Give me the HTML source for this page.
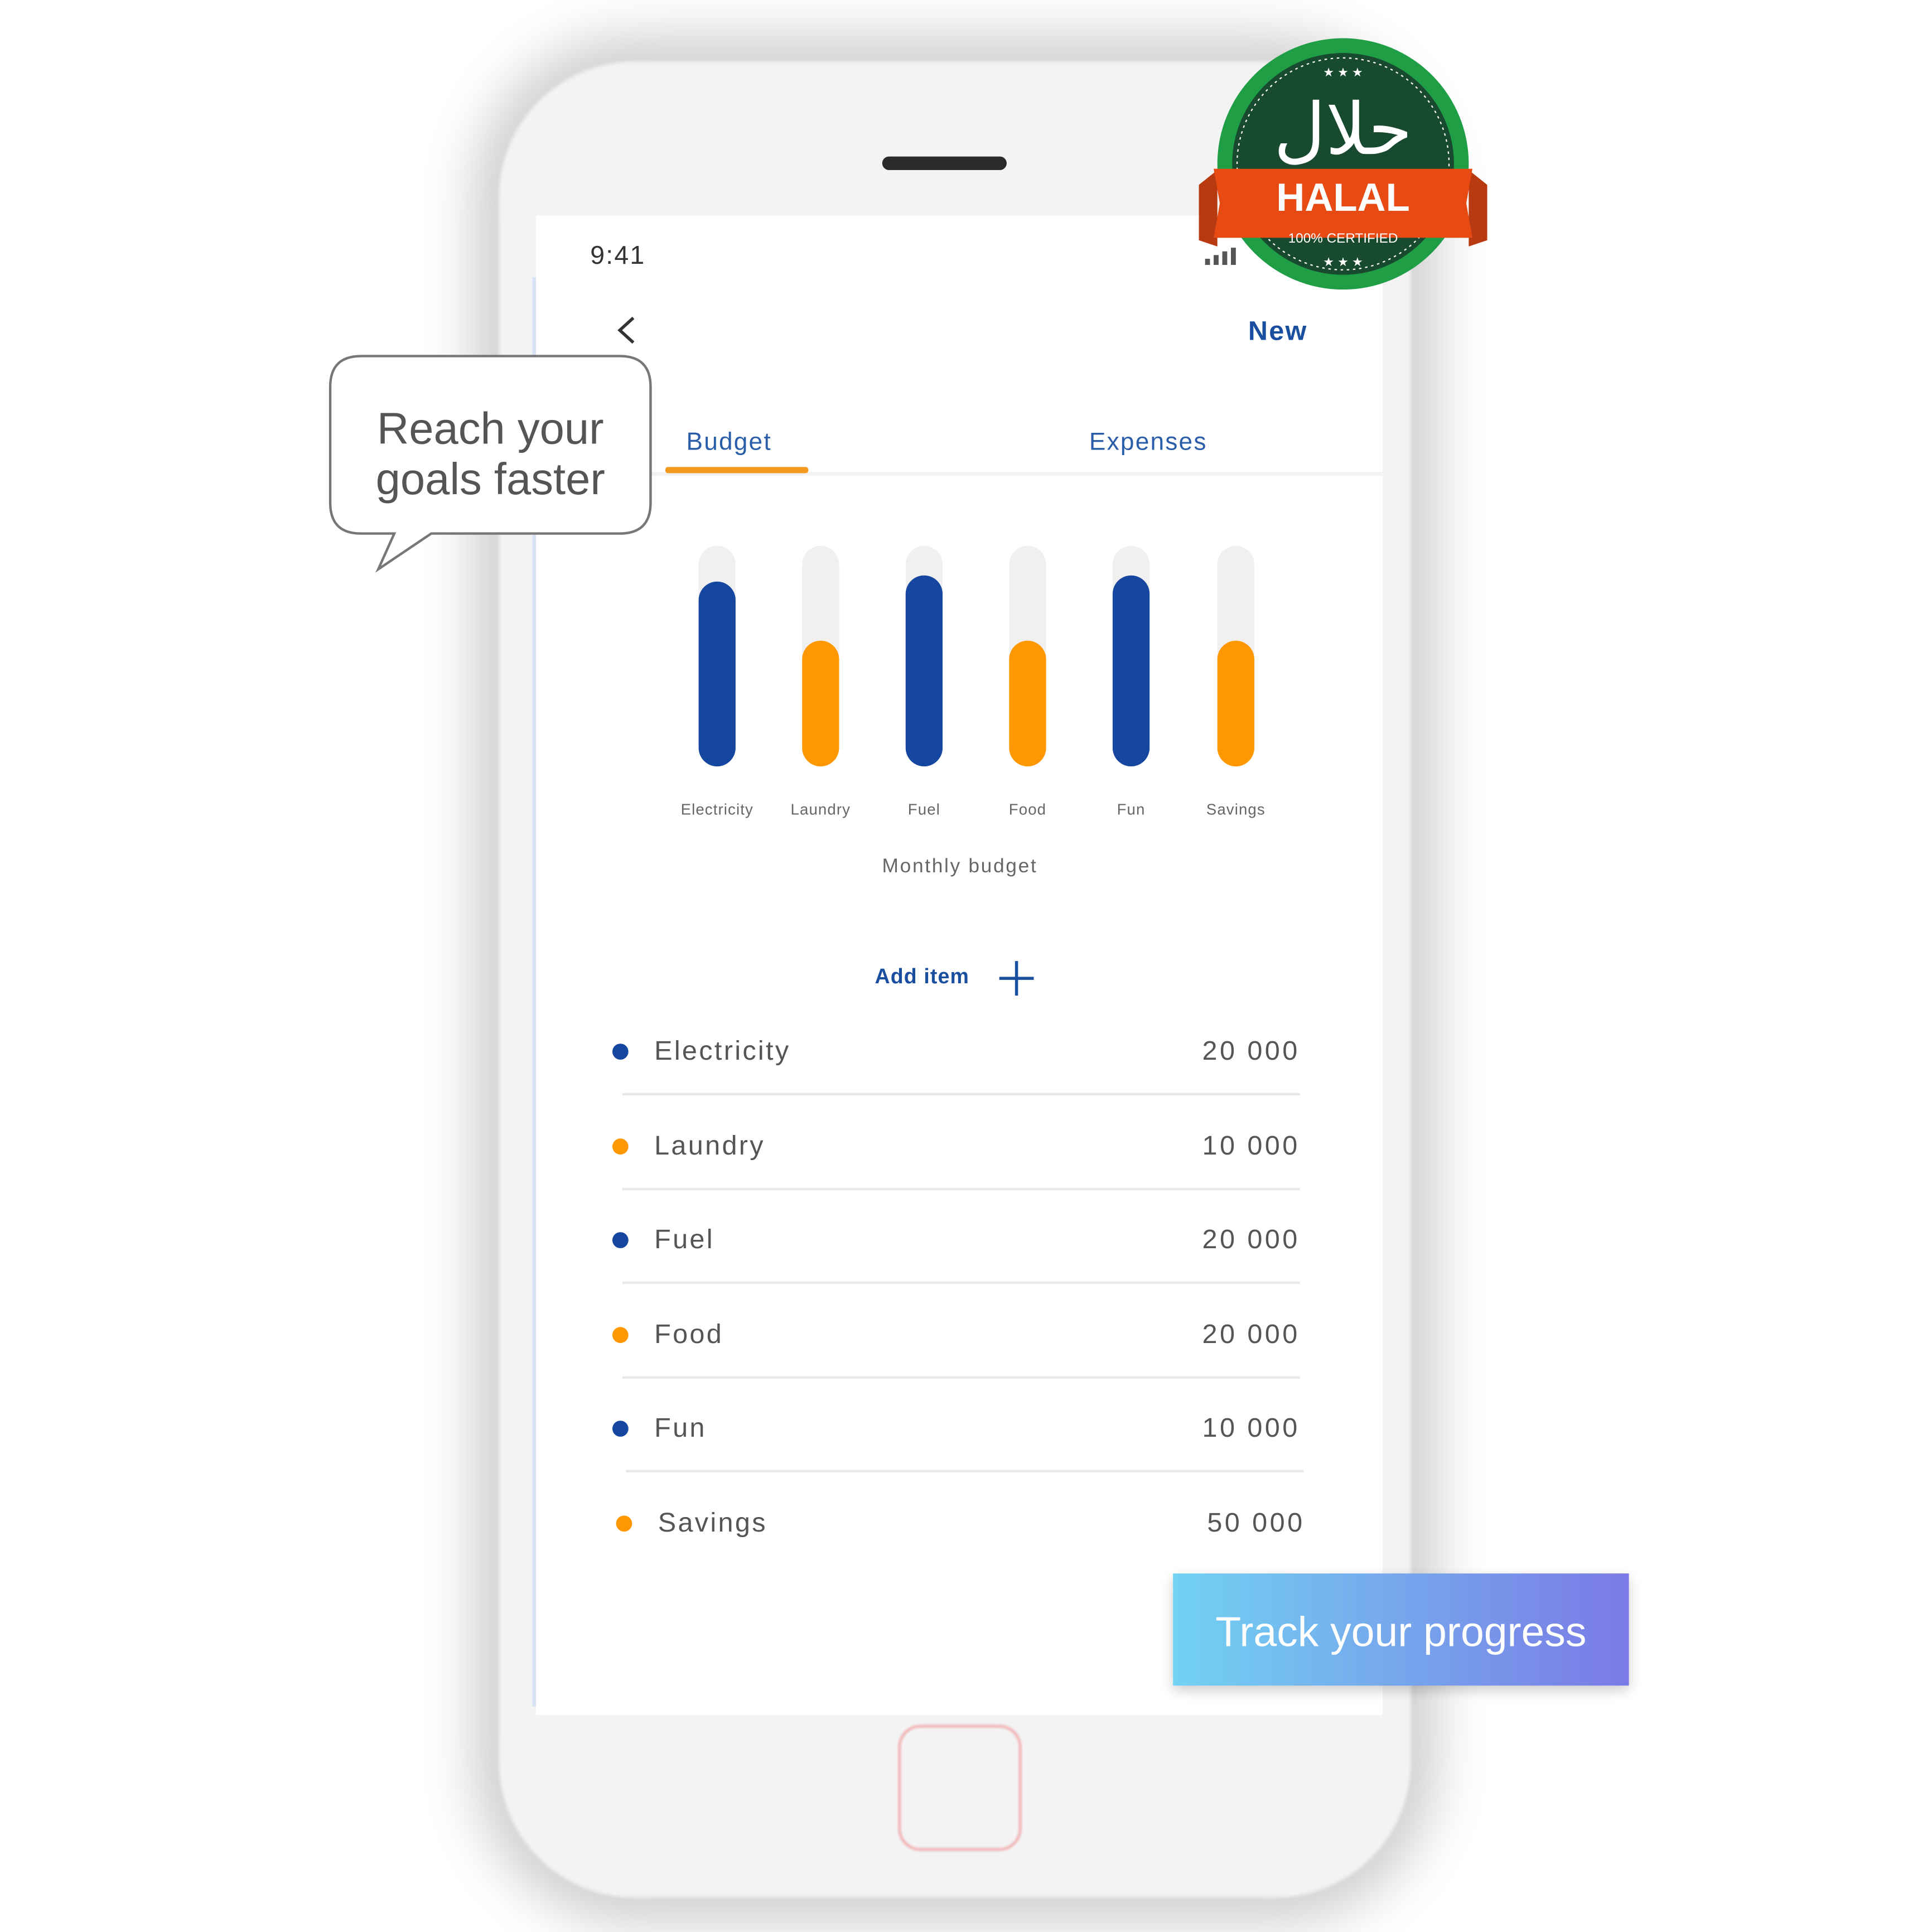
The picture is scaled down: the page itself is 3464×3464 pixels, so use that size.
<!DOCTYPE html>
<html><head><meta charset="utf-8">
<style>
html,body{margin:0;padding:0;background:#fff;}
body{width:3464px;height:3464px;overflow:hidden;position:relative;}
#w{position:absolute;left:0;top:0;width:1568px;height:1568px;transform:scale(2.2092);transform-origin:0 0;font-family:"Liberation Sans",sans-serif;}
.a{position:absolute;}
.phone{left:405px;top:50px;width:740px;height:1490px;border-radius:110px;background:#f4f3f4;box-shadow:0 0 45px 20px rgba(0,0,0,0.2);filter:blur(1.5px);}
.screen{left:435px;top:175px;width:687px;height:1217px;background:#fff;}
.lbl{font-size:12.5px;color:#666;text-align:center;width:90px;margin-left:-45px;top:650px;letter-spacing:0.5px;}
.track{width:30px;top:443px;height:179px;background:#f0f0f0;border-radius:15px;margin-left:-15px;}
.fill{width:30px;bottom:0;left:0;border-radius:15px;position:absolute;}
.row{left:531px;font-size:22px;color:#555;letter-spacing:1.5px;}
.val{right:513px;font-size:22px;color:#555;letter-spacing:2px;}
.dot{width:13px;height:13px;border-radius:50%;left:497px;}
.line{left:505px;width:550px;height:2px;background:#e8e8e8;}
</style></head><body><div id="w">
<div class="a phone"></div>
<div class="a" style="left:716px;top:127px;width:101px;height:11px;border-radius:6px;background:#2a2a2a;"></div>
<div class="a screen"></div>
<div class="a" style="left:432px;top:225px;width:3px;height:1160px;background:#d8e4f5;"></div>
<div class="a" style="left:479px;top:196px;font-size:21px;color:#333;letter-spacing:1px;">9:41</div>
<svg class="a" style="left:978px;top:200px" width="32" height="16"><rect x="0" y="10" width="4" height="5" fill="#555"/><rect x="7" y="7" width="4" height="8" fill="#555"/><rect x="14" y="4" width="4" height="11" fill="#555"/><rect x="21" y="1" width="4" height="14" fill="#555"/></svg>
<svg class="a" style="left:498px;top:255px" width="22" height="26"><path d="M16 3 L5 13 L16 23" stroke="#333" stroke-width="2.5" fill="none"/></svg>
<div class="a" style="left:1013px;top:256px;font-size:22px;font-weight:bold;color:#1a4fa0;letter-spacing:1px;">New</div>
<div class="a" style="left:557px;top:348px;font-size:20px;color:#2a5ea8;letter-spacing:1px;">Budget</div>
<div class="a" style="left:884px;top:348px;font-size:20px;color:#2a5ea8;letter-spacing:1px;">Expenses</div>
<div class="a" style="left:435px;top:383px;width:687px;height:3px;background:#f2f2f2;"></div>
<div class="a" style="left:540px;top:379px;width:116px;height:5px;background:#f39a1e;border-radius:2px;"></div>

<div class="a track" style="left:582px"><div class="fill" style="top:29px;background:#1546a0"></div></div>
<div class="a track" style="left:666px"><div class="fill" style="top:77px;background:#ff9800"></div></div>
<div class="a track" style="left:750px"><div class="fill" style="top:24px;background:#1546a0"></div></div>
<div class="a track" style="left:834px"><div class="fill" style="top:77px;background:#ff9800"></div></div>
<div class="a track" style="left:918px"><div class="fill" style="top:24px;background:#1546a0"></div></div>
<div class="a track" style="left:1003px"><div class="fill" style="top:77px;background:#ff9800"></div></div>
<div class="a lbl" style="left:582px">Electricity</div>
<div class="a lbl" style="left:666px">Laundry</div>
<div class="a lbl" style="left:750px">Fuel</div>
<div class="a lbl" style="left:834px">Food</div>
<div class="a lbl" style="left:918px">Fun</div>
<div class="a lbl" style="left:1003px">Savings</div>
<div class="a" style="left:669px;top:695px;width:220px;text-align:center;font-size:16px;color:#666;letter-spacing:1.2px;">Monthly budget</div>
<div class="a" style="left:710px;top:783px;font-size:17px;color:#1a4fa0;font-weight:bold;letter-spacing:0.5px;">Add item</div>
<svg class="a" style="left:808px;top:778px" width="34" height="32"><path d="M17 2V30M3 16H31" stroke="#1a4fa0" stroke-width="2.5"/></svg>

<div class="a dot" style="top:847px;background:#1546a0"></div><div class="a row" style="top:840px">Electricity</div><div class="a val" style="top:840px">20 000</div>
<div class="a line" style="top:887px"></div>
<div class="a dot" style="top:924px;background:#ff9800"></div><div class="a row" style="top:917px">Laundry</div><div class="a val" style="top:917px">10 000</div>
<div class="a line" style="top:964px"></div>
<div class="a dot" style="top:1000px;background:#1546a0"></div><div class="a row" style="top:993px">Fuel</div><div class="a val" style="top:993px">20 000</div>
<div class="a line" style="top:1040px"></div>
<div class="a dot" style="top:1077px;background:#ff9800"></div><div class="a row" style="top:1070px">Food</div><div class="a val" style="top:1070px">20 000</div>
<div class="a line" style="top:1117px"></div>
<div class="a dot" style="top:1153px;background:#1546a0"></div><div class="a row" style="top:1146px">Fun</div><div class="a val" style="top:1146px">10 000</div>
<div class="a line" style="top:1193px;left:508px"></div>
<div class="a dot" style="top:1230px;left:500px;background:#ff9800"></div><div class="a row" style="top:1223px;left:534px">Savings</div><div class="a val" style="top:1223px;right:509px">50 000</div>

<div class="a" style="left:729px;top:1400px;width:96px;height:98px;border:2px solid #f0a8a8;border-radius:18px;filter:blur(1px);"></div>

<svg class="a" style="left:262px;top:284px" width="275" height="185">
<path d="M31 5 H241 Q266 5 266 30 V124 Q266 149 241 149 H88 L45 178 L58 149 H31 Q6 149 6 124 V30 Q6 5 31 5 Z" fill="#fff" stroke="#777" stroke-width="2"/>
</svg>
<div class="a" style="left:268px;top:327px;width:260px;text-align:center;font-size:36px;line-height:41px;color:#555;">Reach your<br>goals faster</div>

<div class="a" style="left:952px;top:1277px;width:370px;height:91px;background:linear-gradient(90deg,#72d2f2,#7a7ae6);box-shadow:0 4px 10px rgba(0,0,0,0.2);"></div>
<div class="a" style="left:952px;top:1306px;width:370px;text-align:center;font-size:34px;color:#fff;">Track your progress</div>

<svg class="a" style="left:970px;top:30px" width="240" height="210">
<circle cx="120" cy="103" r="102" fill="#1f9e45"/>
<circle cx="120" cy="103" r="90" fill="#174a2e"/>
<circle cx="120" cy="103" r="86" fill="none" stroke="#fff" stroke-width="1" stroke-dasharray="2 3"/>
<path d="M3 120 L18 108 L18 170 L3 165 Z" fill="#b83a10"/>
<path d="M237 120 L222 108 L222 170 L237 165 Z" fill="#b83a10"/>
<path d="M15 107 H225 L220 135 L225 163 H15 L20 135 Z" fill="#e84a14"/>
<text x="120" y="141" text-anchor="middle" font-family="Liberation Sans" font-weight="bold" font-size="32" fill="#fff">HALAL</text>
<text x="120" y="167" text-anchor="middle" font-family="Liberation Sans" font-size="11" fill="#fff">100% CERTIFIED</text>
<text x="120" y="95" text-anchor="middle" font-family="DejaVu Sans" font-size="58" fill="#fff">حلال</text>
<text x="120" y="32" text-anchor="middle" font-size="10" fill="#fff">★ ★ ★</text>
<text x="120" y="186" text-anchor="middle" font-size="10" fill="#fff">★ ★ ★</text>
</svg>
</div></body></html>
